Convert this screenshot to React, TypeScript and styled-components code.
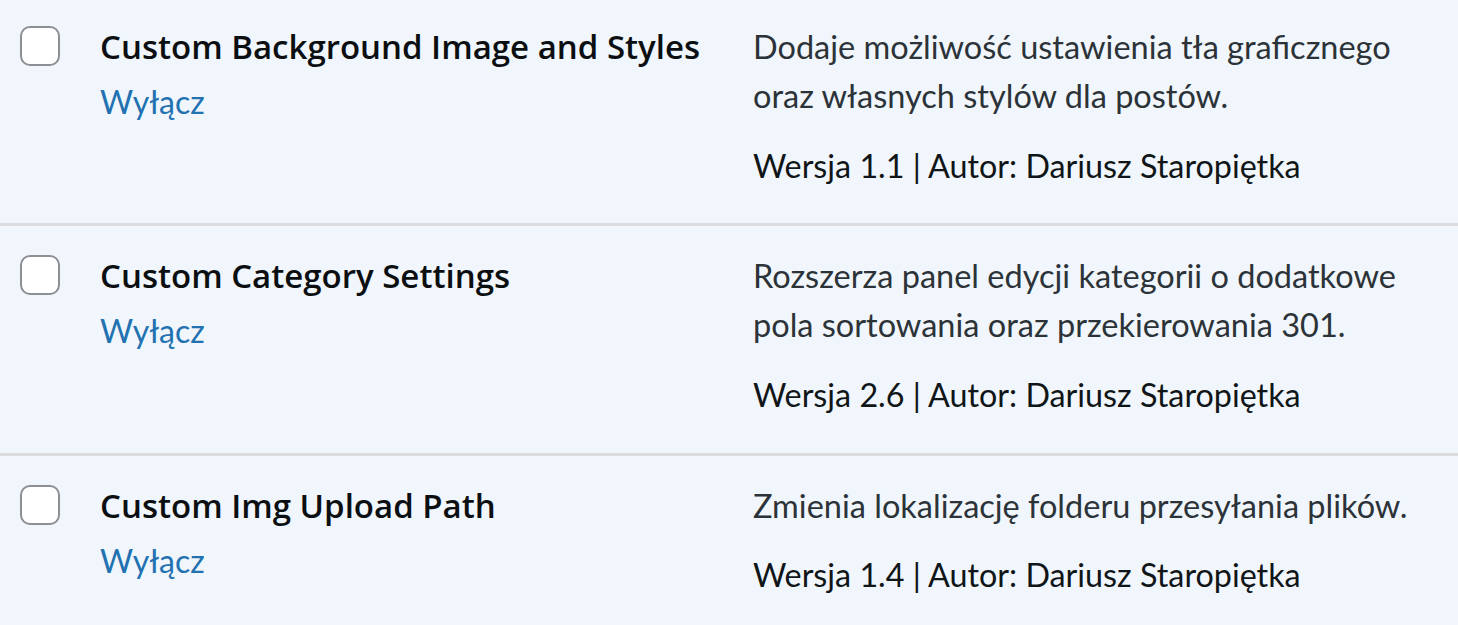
import React from "react";
import styled, { createGlobalStyle } from "styled-components";

const GlobalStyle = createGlobalStyle`
  html, body { margin: 0; padding: 0; background: #f0f6fc; }
  body { font-family: Lato, "Noto Sans", sans-serif; }
`;

const Table = styled.div`
  width: 1458px;
  height: 625px;
  overflow: hidden;
  background: #f0f6fc;
`;

const List = styled.div`
  margin-top: -3px;
  display: flex;
  flex-direction: column;
`;

const Row = styled.div`
  display: grid;
  grid-template-columns: 100px 653px 1fr;
  padding: 26px 0 33px;
  border-bottom: 3px solid #dcdcde;
  background: #f0f6fc;
`;

const CheckCell = styled.div`
  padding: 3px 0 0 20px;
`;

const Checkbox = styled.span`
  display: block;
  width: 40px;
  height: 40px;
  box-sizing: border-box;
  border: 2.5px solid #8c8f94;
  border-radius: 10px;
  background: #fff;
`;

const TitleCell = styled.div`
  display: flex;
  flex-direction: column;
`;

const Title = styled.strong`
  margin-top: 1px;
  font-family: "Open Sans", "Noto Sans", sans-serif;
  font-weight: 600;
  font-size: 33px;
  line-height: 46px;
  color: #0c0f11;
  white-space: nowrap;
`;

const Actions = styled.div`
  margin-top: 8px;
  font-family: Lato, "Noto Sans", sans-serif;
  font-size: 32px;
  line-height: 48.75px;
`;

const ActionLink = styled.a`
  color: #2271b1;
  text-decoration: none;
`;

const DescCell = styled.div`
  display: flex;
  flex-direction: column;
  gap: 21px;
  font-family: Lato, "Noto Sans", sans-serif;
  font-size: 32.5px;
  line-height: 48.75px;
`;

const Description = styled.p`
  margin: 0;
  color: #2c3338;
`;

const Meta = styled.div`
  color: #101517;
  font-size: 32.3px;
`;

type Plugin = { name: string; desc: string[]; version: string };

const plugins: Plugin[] = [
  {
    name: "Custom Background Image and Styles",
    desc: ["Dodaje możliwość ustawienia tła graficznego", "oraz własnych stylów dla postów."],
    version: "1.1",
  },
  {
    name: "Custom Category Settings",
    desc: ["Rozszerza panel edycji kategorii o dodatkowe", "pola sortowania oraz przekierowania 301."],
    version: "2.6",
  },
  {
    name: "Custom Img Upload Path",
    desc: ["Zmienia lokalizację folderu przesyłania plików."],
    version: "1.4",
  },
];

export default function App() {
  return (
    <Table>
      <GlobalStyle />
      <List>
        {plugins.map((p) => (
          <Row key={p.name}>
            <CheckCell>
              <Checkbox />
            </CheckCell>
            <TitleCell>
              <Title>{p.name}</Title>
              <Actions>
                <ActionLink href="#">Wyłącz</ActionLink>
              </Actions>
            </TitleCell>
            <DescCell>
              <Description>
                {p.desc.map((line, i) => (
                  <React.Fragment key={i}>
                    {i > 0 && <br />}
                    {line}
                  </React.Fragment>
                ))}
              </Description>
              <Meta>Wersja {p.version} | Autor: Dariusz Staropiętka</Meta>
            </DescCell>
          </Row>
        ))}
      </List>
    </Table>
  );
}
